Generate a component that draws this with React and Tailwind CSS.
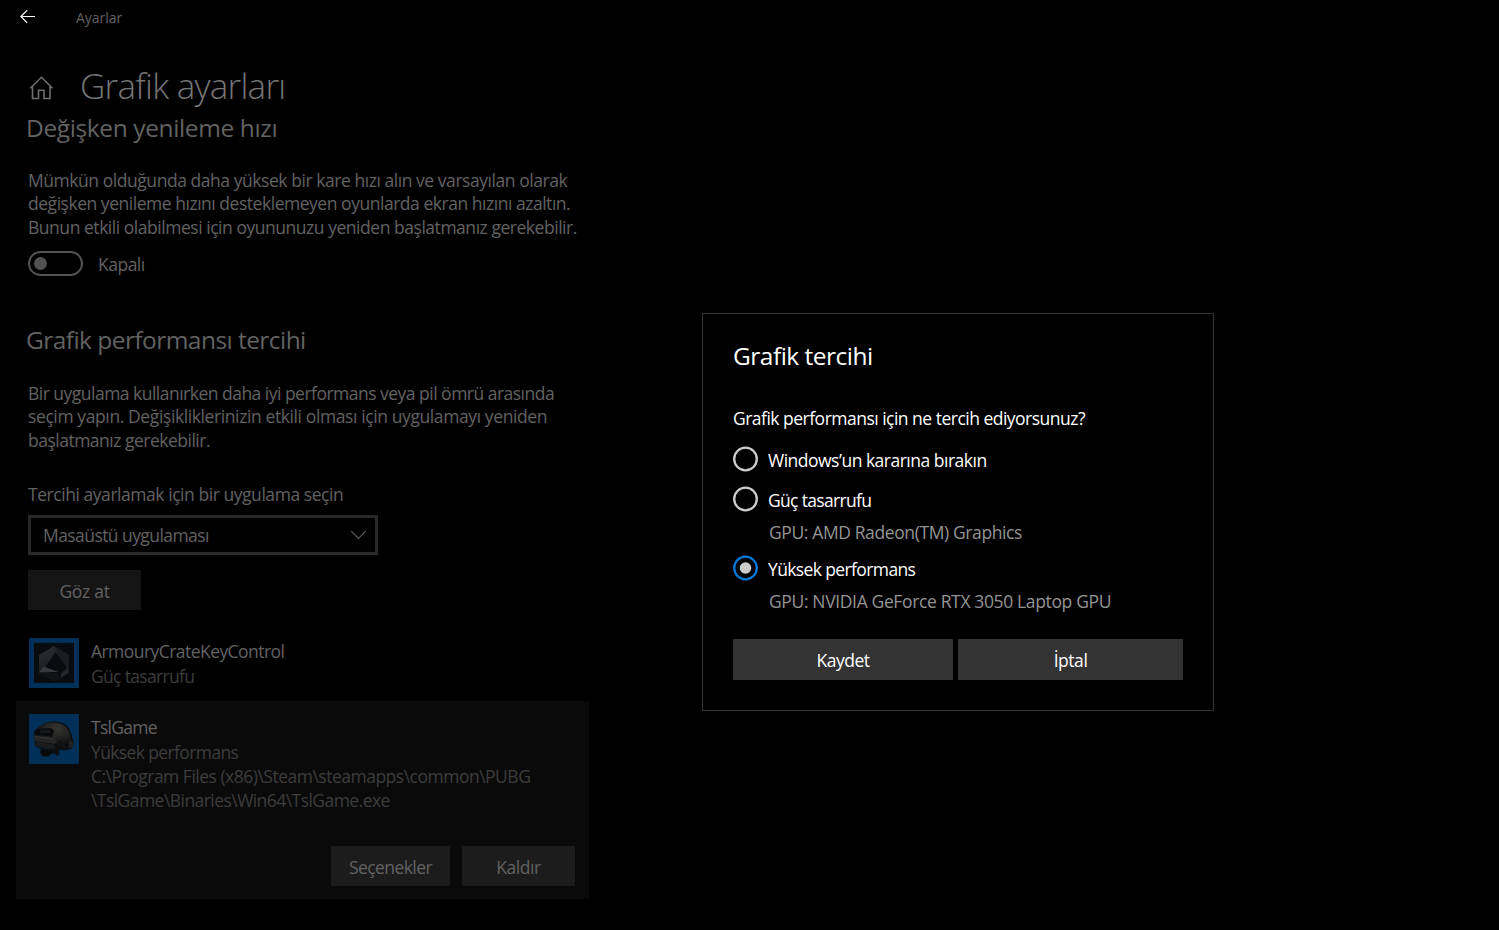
import React from 'react';

const BackIcon = () => (
    <svg className="w-4 h-4 mb-1" viewBox="0 0 16 16" fill="none" stroke="#fff" strokeWidth="1.2">
        <path d="M15 8.500H1M7.200 2.200L0.900 8.500l6.300 6.300" />
    </svg>
);

const HomeIcon = () => (
    <svg className="w-6 h-6 mt-1" viewBox="0 0 24 24" fill="none" stroke="#6e6e6e" strokeWidth="1.6">
        <path d="M1.2 12.300L12.500 1.300l11 11M3.500 10.400v12.100h6v-8.200h5.500v8.200h6V10.400" />
    </svg>
);

const ChevronIcon = () => (
    <svg className="w-4 h-4" viewBox="0 0 16 16" fill="none" stroke="#5c5c5c" strokeWidth="1.1">
        <path d="M0.300 4.200l7.200 7.200 7.200-7.200" />
    </svg>
);

const ArmouryIcon = () => (
    <svg className="w-[50px] h-[50px] shrink-0" viewBox="0 0 50 50">
        <defs>
            <linearGradient id="armoury" x1="0" y1="0" x2="0.4" y2="1">
                <stop offset="0" stopColor="#2c2f34" />
                <stop offset="0.5" stopColor="#1f2226" />
                <stop offset="1" stopColor="#0e1013" />
            </linearGradient>
        </defs>
        <rect width="50" height="50" fill="#003057" />
        <rect x="5" y="5" width="40" height="40" fill="#090b0e" />
        <path d="M25 8L40 17v18L25 43.500 10 35V17z" fill="url(#armoury)" />
        <path d="M25 8l2.500 5 11 22-6 5L40 35V17z" fill="#1a1d21" />
        <path d="M26.500 14L38 30l-6 9-17.500-7z" fill="#0a0b0e" />
        <path d="M14.500 28.500l15 5.500H10.500z" fill="#36393e" />
        <path d="M39 29l-7 6.500v4.500l7-5z" fill="#24272b" />
        <path d="M10 35l15 8.500 7-4-4-4.500z" fill="#101215" />
    </svg>
);

const HelmetIcon = () => (
    <svg className="w-[50px] h-[50px] shrink-0" viewBox="0 0 50 50">
        <defs>
            <radialGradient id="helmet" cx="0.6" cy="0.25" r="0.6">
                <stop offset="0" stopColor="#353433" />
                <stop offset="0.6" stopColor="#232322" />
                <stop offset="1" stopColor="#111213" />
            </radialGradient>
        </defs>
        <rect width="50" height="50" fill="#003057" />
        <path d="M5 18C9 13 15 7.500 25 7.500c10 0 15.500 5 17.500 13l2.500 9-2 5-8 2-5-1 0.500 4-2.500 3-2-3-4 0.500-2.500 2.500H13l-2-4 1-3-6-4z" fill="#0d0e0f" />
        <path d="M7 16C12 11 17 8.500 25 8.500c9 0 14 5 16 12l1 8-4 5-9-1-4-7-18-5z" fill="url(#helmet)" />
        <path d="M7 15l15-1 3 3-2 6-17-3z" fill="#08090a" />
        <path d="M11 16l10-0.500 1 3.500-11 0.500z" fill="#17181a" />
        <path d="M5 21c7 2 13 1 20 3l3 3-2 3c-7-2-14-1-20-3z" fill="#242424" />
        <path d="M6 22.500c7 1.500 12 1 18 3" fill="none" stroke="#363636" strokeWidth="0.9" />
        <path d="M6 28c6 1 14 1 19 3l1 4c-6 0-12-1-18-3z" fill="#1b1c1c" />
        <path d="M10 33c4 1 8 2 12 2" fill="none" stroke="#07182a" strokeWidth="1" />
        <path d="M12 36l9 0.500 2 2.500-6 2.500-4-1z" fill="#08090b" />
        <path d="M40 26l4 2v5l-4 1z" fill="#222" />
        <circle cx="37" cy="31" r="1.3" fill="#080808" />
        <circle cx="31" cy="28" r="1" fill="#0b0b0b" />
    </svg>
);

const Radio = ({ checked }) => (
    <svg className="w-[25px] h-[26px] shrink-0" viewBox="0 0 25 26" fill="none">
        <circle cx="12.500" cy="13" r="11.300" stroke={checked ? '#0078d7' : '#ccc'} strokeWidth="2.300" />
        {checked && <circle cx="12.500" cy="13" r="5.800" fill="#ccc" />}
    </svg>
);

export default function App() {
    return (
        <div className="relative w-[1499px] h-[930px] bg-black overflow-hidden whitespace-nowrap font-['Open_Sans','Noto_Sans',sans-serif] text-[17.5px] leading-6 text-[#626262]">
            <header className="flex items-center h-9 pl-5 gap-10">
                <BackIcon />
                <span className="text-[14px] tracking-[-0.05px]">Ayarlar</span>
            </header>

            <main className="w-[589px] pl-4 pt-[26px]">
                <div className="flex items-center h-12 pl-[13px]">
                    <HomeIcon />
                    <h1 className="ml-[27px] text-[35px] leading-[48px] font-light tracking-[-0.75px] text-[#757575]">Grafik ayarları</h1>
                </div>

                <section className="pl-3">
                    <h2 className="mt-px -ml-0.5 text-[24.5px] leading-[33px] tracking-[-0.38px]">Değişken yenileme hızı</h2>
                    <p className="mt-[24.5px] h-[70.5px] leading-[23.5px]">
                        <span className="block tracking-[-0.45px]">Mümkün olduğunda daha yüksek bir kare hızı alın ve varsayılan olarak</span>
                        <span className="block tracking-[-0.47px]">değişken yenileme hızını desteklemeyen oyunlarda ekran hızını azaltın.</span>
                        <span className="block tracking-[-0.465px]">Bunun etkili olabilmesi için oyununuzu yeniden başlatmanız gerekebilir.</span>
                    </p>
                    <div className="flex items-center mt-3 h-[25px]">
                        <div className="flex items-center w-[55px] h-[25px] pl-[3.5px] rounded-full border-[2.5px] border-[#525252]">
                            <div className="w-[13px] h-[13px] rounded-full bg-[#525252]"></div>
                        </div>
                        <span className="ml-[15px] tracking-[-0.5px]">Kapalı</span>
                    </div>
                </section>

                <section className="pl-3">
                    <h2 className="mt-[47px] -ml-0.5 text-[24.5px] leading-[33px] tracking-[-0.55px]">Grafik performansı tercihi</h2>
                    <p className="mt-[25.5px] h-[70.5px] leading-[23.5px]">
                        <span className="block tracking-[-0.515px]">Bir uygulama kullanırken daha iyi performans veya pil ömrü arasında</span>
                        <span className="block tracking-[-0.395px]">seçim yapın. Değişikliklerinizin etkili olması için uygulamayı yeniden</span>
                        <span className="block tracking-[-0.5px]">başlatmanız gerekebilir.</span>
                    </p>
                    <div className="mt-[30px] tracking-[-0.45px]">Tercihi ayarlamak için bir uygulama seçin</div>
                    <div className="flex items-center justify-between mt-[9px] w-[350px] h-10 pl-3 pr-2 border-3 border-[#292929]">
                        <span className="tracking-[-0.57px]">Masaüstü uygulaması</span>
                        <ChevronIcon />
                    </div>
                    <button className="block mt-[15px] w-[113px] h-10 pt-0.5 bg-[#141414] tracking-[-0.3px]">Göz at</button>
                </section>

                <div className="flex mt-7 h-[50px] pl-[13px]">
                    <ArmouryIcon />
                    <div className="ml-3 pt-px">
                        <div className="h-[25px] tracking-[-0.55px]">ArmouryCrateKeyControl</div>
                        <div className="text-[#3d3d3d] tracking-[-0.68px]">Güç tasarrufu</div>
                    </div>
                </div>

                <div className="mt-[13px] h-[198px] pt-[13px] pl-[13px] bg-[#0a0a0a]">
                    <div className="flex">
                        <HelmetIcon />
                        <div className="ml-3 pt-px text-[#3d3d3d]">
                            <div className="h-[25px] text-[#626262] tracking-[-0.7px]">TslGame</div>
                            <div className="tracking-[-0.62px]">Yüksek performans</div>
                            <div className="tracking-[-0.5px]">C:\Program Files (x86)\Steam\steamapps\common\PUBG</div>
                            <div className="tracking-[-0.55px]">\TslGame\Binaries\Win64\TslGame.exe</div>
                        </div>
                    </div>
                    <div className="flex justify-end gap-3 mt-[34px] pr-3.5">
                        <button className="w-[119px] h-10 pt-0.5 bg-[#1c1c1c] tracking-[-0.58px]">Seçenekler</button>
                        <button className="w-[113px] h-10 pt-0.5 bg-[#1c1c1c] tracking-[-0.45px]">Kaldır</button>
                    </div>
                </div>
            </main>

            <div className="absolute left-[702px] top-[313px] w-[512px] h-[398px] px-[30px] pt-[25px] bg-black border border-[#333] text-white">
                <h2 className="text-[24.5px] leading-[33px] tracking-[-0.5px]">Grafik tercihi</h2>
                <div className="mt-[34px] tracking-[-0.51px]">Grafik performansı için ne tercih ediyorsunuz?</div>

                <div className="flex mt-4 h-[26px]">
                    <Radio />
                    <span className="ml-2.5 pt-0.5 tracking-[-0.5px]">Windows’un kararına bırakın</span>
                </div>
                <div className="flex mt-3.5 h-[26px]">
                    <Radio />
                    <span className="ml-2.5 pt-0.5 tracking-[-0.68px]">Güç tasarrufu</span>
                </div>
                <div className="mt-2 pl-9 text-[#949494] tracking-[-0.39px]">GPU: AMD Radeon(TM) Graphics</div>
                <div className="flex mt-[11px] h-[26px]">
                    <Radio checked />
                    <span className="ml-2.5 pt-0.5 tracking-[-0.62px]">Yüksek performans</span>
                </div>
                <div className="mt-2 pl-9 text-[#949494] tracking-[-0.36px]">GPU: NVIDIA GeForce RTX 3050 Laptop GPU</div>

                <div className="flex gap-[5px] mt-[26px]">
                    <button className="w-[220px] h-[41px] bg-[#333] tracking-[-0.5px]">Kaydet</button>
                    <button className="w-[225px] h-[41px] bg-[#333] tracking-[-0.45px]">İptal</button>
                </div>
            </div>
        </div>
    );
}
